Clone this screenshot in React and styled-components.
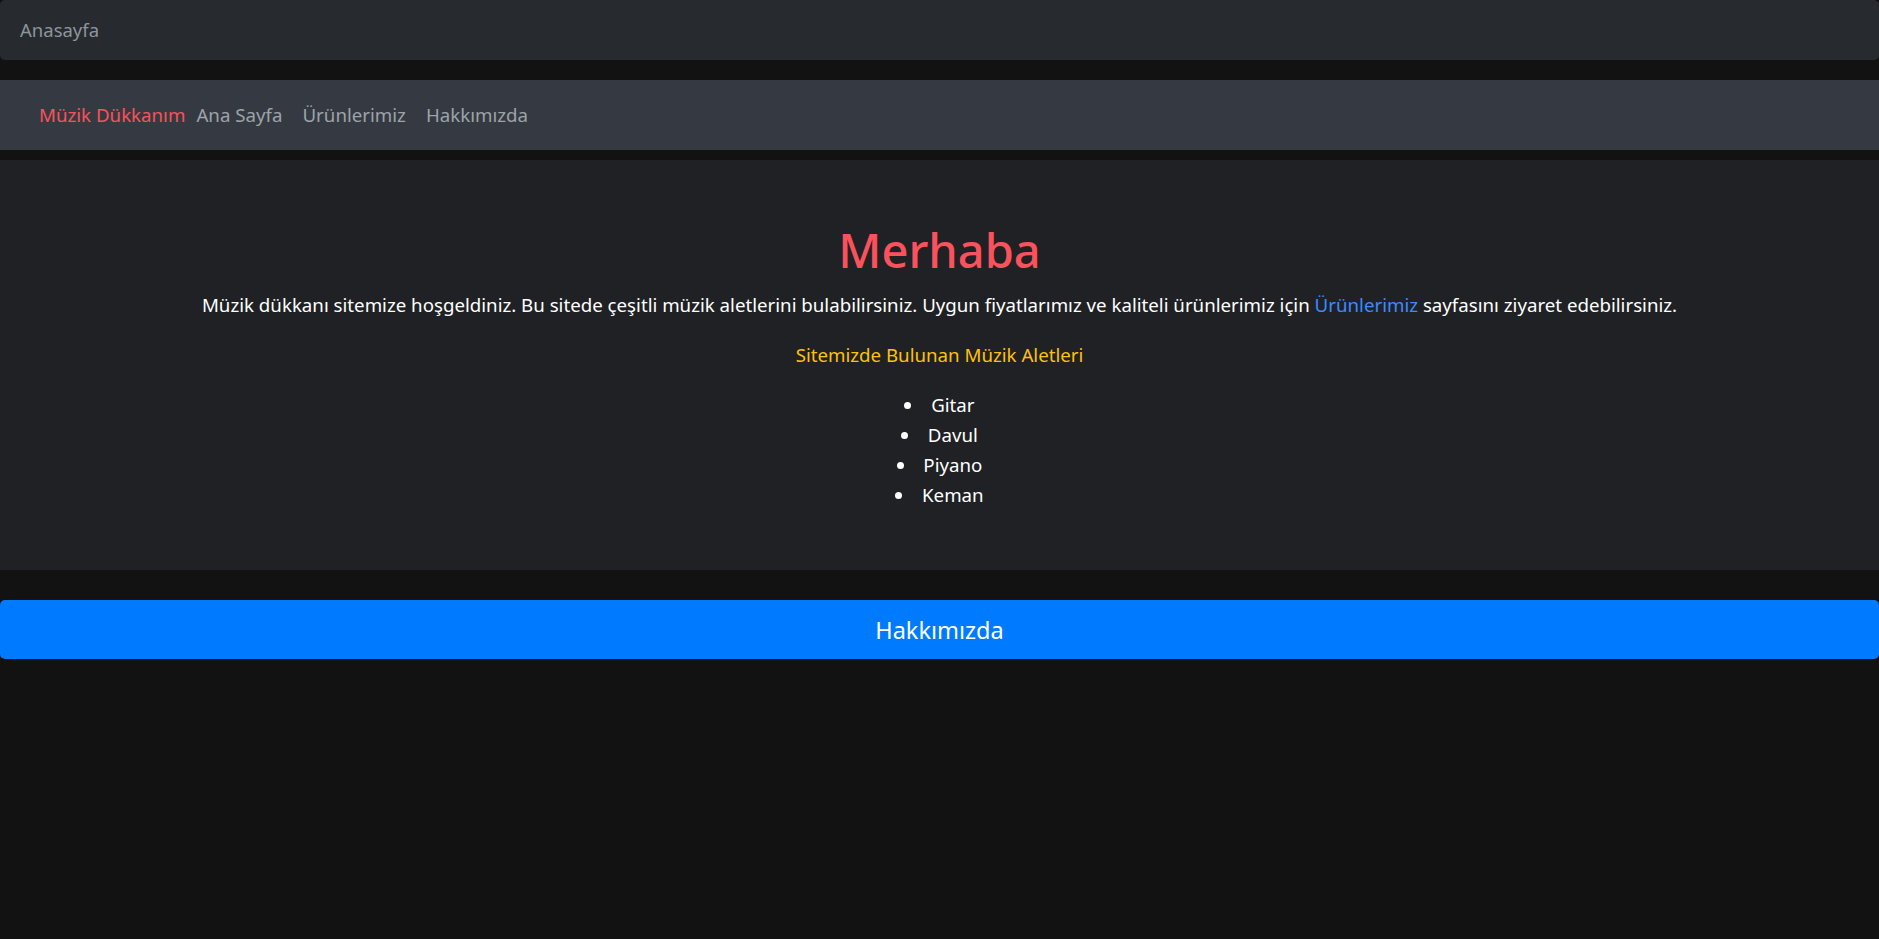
import styled, { createGlobalStyle } from "styled-components";

const GlobalStyle = createGlobalStyle`
  body {
    margin: 0;
    background: #121212;
    font-family: "Noto Sans", "Open Sans", sans-serif;
    font-size: 18.7px;
    line-height: 30px;
    color: #fff;
  }
`;

const Page = styled.div`
  display: flex;
  flex-direction: column;
`;

const Breadcrumb = styled.nav`
  height: 60px;
  display: flex;
  align-items: center;
  padding: 0 20px;
  background: #272a2e;
  border-radius: 5px;
  color: #8d959c;
  font-size: 18.5px;
  margin-bottom: 20px;
`;

const Navbar = styled.nav`
  height: 70px;
  display: flex;
  align-items: center;
  padding: 0 39px;
  background: #353a42;
  gap: 20px;
`;

const Brand = styled.a`
  color: #f8525b;
  margin-right: -9px;
`;

const NavLink = styled.a`
  color: #9da3a8;
`;

const Jumbotron = styled.section`
  margin-top: 10px;
  padding: 60px 0;
  background: #202124;
  text-align: center;
`;

const Title = styled.h1`
  margin: 0 0 10px;
  font-size: 47px;
  font-weight: 500;
  line-height: 60px;
  color: #fa525d;
`;

const Text = styled.p`
  margin: 0 0 20px;
  color: ${props => props.color || "#fff"};
`;

const Link = styled.a`
  color: #3b8bff;
`;

const List = styled.ul`
  margin: 0;
  padding: 0;
  list-style-position: inside;
`;

const Item = styled.li``;

const Button = styled.button`
  margin-top: 30px;
  height: 59px;
  width: 100%;
  border: none;
  border-radius: 5px;
  background: #007bff;
  color: #fff;
  font-family: inherit;
  font-size: 23.5px;
`;

export default function App() {
  return (
    <Page>
      <GlobalStyle />
      <Breadcrumb>Anasayfa</Breadcrumb>
      <Navbar>
        <Brand>Müzik Dükkanım</Brand>
        <NavLink>Ana Sayfa</NavLink>
        <NavLink>Ürünlerimiz</NavLink>
        <NavLink>Hakkımızda</NavLink>
      </Navbar>
      <Jumbotron>
        <Title>Merhaba</Title>
        <Text>
          Müzik dükkanı sitemize hoşgeldiniz. Bu sitede çeşitli müzik aletlerini bulabilirsiniz. Uygun fiyatlarımız ve kaliteli ürünlerimiz için <Link>Ürünlerimiz</Link> sayfasını ziyaret edebilirsiniz.
        </Text>
        <Text color="#ffc107">Sitemizde Bulunan Müzik Aletleri</Text>
        <List>
          {["Gitar", "Davul", "Piyano", "Keman"].map(name => (
            <Item key={name}>{name}</Item>
          ))}
        </List>
      </Jumbotron>
      <Button>Hakkımızda</Button>
    </Page>
  );
}
